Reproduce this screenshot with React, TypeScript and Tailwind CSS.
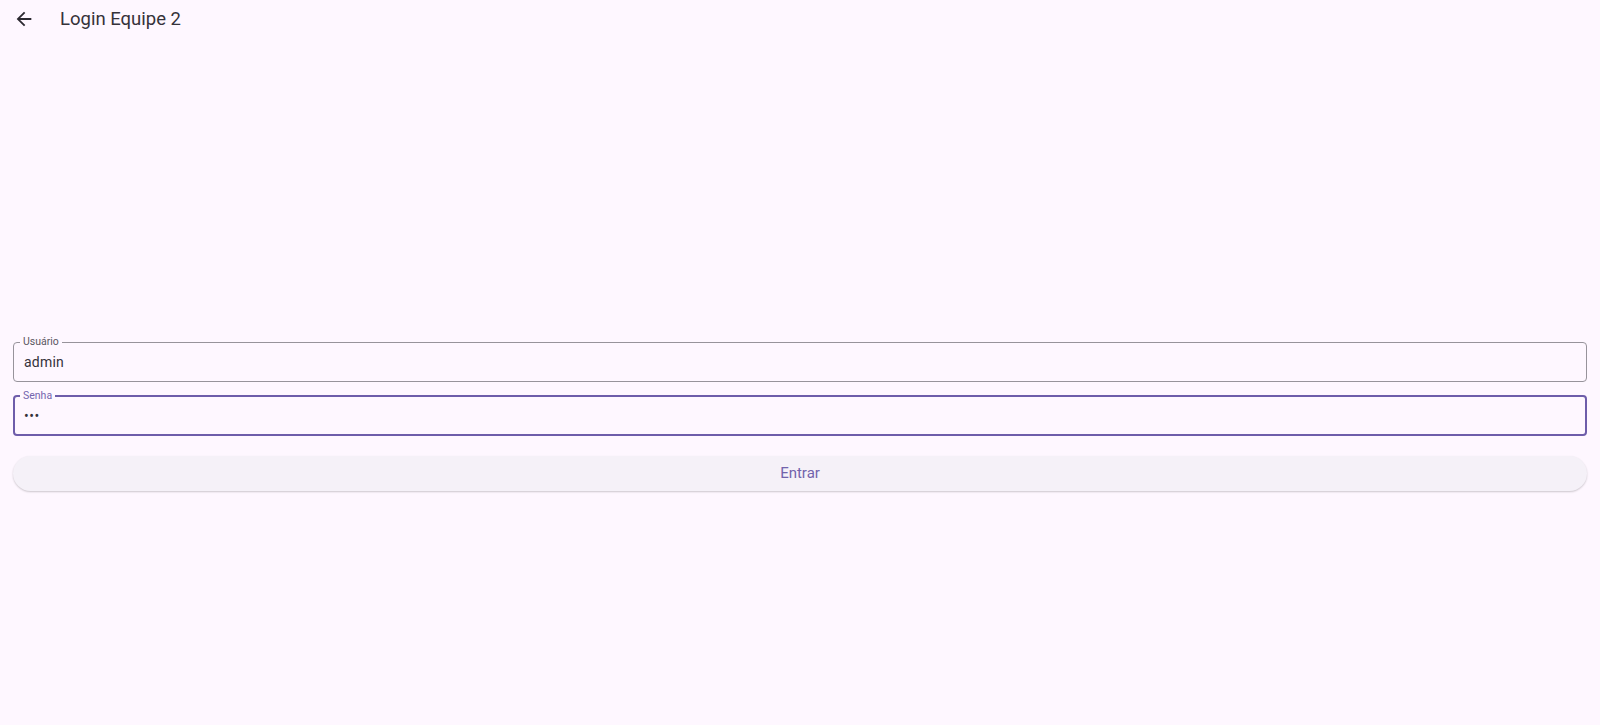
import React from "react";

export default function App() {
  return (
    <div className="min-h-[725px] w-full bg-[#FEF7FF] font-['Roboto',sans-serif]">
      <header className="flex h-[38px] items-center pl-[12.5px]">
        <svg viewBox="0 0 24 24" className="h-[22px] w-[22px]" fill="#2B2930">
          <path d="M20 11H7.83l5.59-5.59L12 4l-8 8 8 8 1.41-1.41L7.83 13H20v-2z" />
        </svg>
        <span className="ml-[25.5px] text-[18.5px] leading-[24px] text-[#35323A]">
          Login Equipe 2
        </span>
      </header>

      <main className="mx-[13px] pt-[298px]">
        <fieldset className="m-0 rounded-[4px] border border-[#97939B] pb-[9px] pl-[6px] pr-[6px] pt-[4px]">
          <legend className="px-[3px] text-[10.5px] leading-[12px] text-[#5A5660]">
            Usuário
          </legend>
          <div className="ml-[4px] text-[14px] leading-[20px] tracking-[0.2px] text-[#35323A]">
            admin
          </div>
        </fieldset>

        <fieldset className="m-0 mt-[8px] rounded-[4px] border-2 border-[#6E5DAA] pb-[8px] pl-[5px] pr-[5px] pt-[4px]">
          <legend className="px-[3px] text-[10.5px] leading-[12px] text-[#7464AE]">
            Senha
          </legend>
          <div className="ml-[4px] text-[14px] leading-[20px] tracking-[0.5px] text-[#35323A]">
            •••
          </div>
        </fieldset>

        <button
          type="button"
          className="mt-[20px] flex h-[35px] w-full items-center justify-center rounded-full bg-[#F5F1F8] text-[15px] text-[#7263AC] shadow-[0_1px_2px_rgba(0,0,0,0.2)]"
        >
          Entrar
        </button>
      </main>
    </div>
  );
}
